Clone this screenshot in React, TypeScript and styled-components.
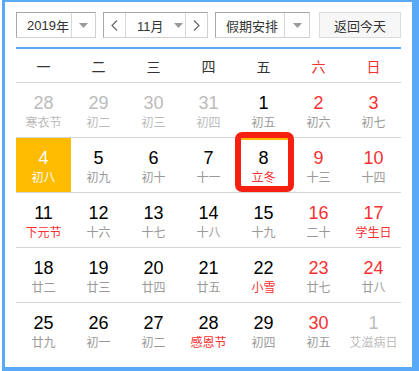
import React from "react";
import styled, { createGlobalStyle } from "styled-components";

const Global = createGlobalStyle`
  html, body { margin: 0; padding: 0; background: #fff; }
  body { font-family: "Liberation Sans", Arial, "Noto Sans CJK SC", sans-serif; }
  * { box-sizing: border-box; }
`;

const BLUE = "#5aa9f6";
const RED = "#f73131";
const ORANGE = "#ffbb00";

const Root = styled.div`
  height: 371px;
  width: 419px;
  padding-left: 2px;
`;

const Frame = styled.div`
  height: 100%;
  background: #fff;
  border-style: solid;
  border-color: ${BLUE};
  border-width: 2px 7px 4px 3px;
  padding: 10px 11px 0 11px;
`;

const Toolbar = styled.div`
  display: flex;
  align-items: stretch;
  height: 26px;
  font-size: 13px;
  color: #333;
  font-family: "Liberation Sans", Arial, "Noto Sans CJK SC", sans-serif;
`;

const Box = styled.div<{ $w: number; $ml?: number }>`
  display: flex;
  align-items: stretch;
  width: ${(p) => p.$w}px;
  margin-left: ${(p) => p.$ml ?? 0}px;
  border: 1px solid #d0d0d0;
  border-left-color: #a8a8a8;
  border-top-color: #a8a8a8;
  background: #fff;
`;

const Label = styled.div<{ $pl?: number }>`
  flex: 1;
  display: flex;
  align-items: center;
  padding-left: ${(p) => p.$pl ?? 10}px;
  white-space: nowrap;
  overflow: hidden;
`;

const CaretCell = styled.div<{ $w: number }>`
  width: ${(p) => p.$w}px;
  flex: none;
  border-left: 1px solid #d8d8d8;
  display: flex;
  align-items: center;
  justify-content: center;
`;

const ArrowBtn = styled.div<{ $side: "l" | "r" }>`
  width: 22px;
  flex: none;
  display: flex;
  align-items: center;
  justify-content: center;
  ${(p) => (p.$side === "l" ? "border-right: 1px solid #d8d8d8;" : "border-left: 1px solid #d8d8d8;")}
`;

const MonthLabel = styled.div`
  flex: 1;
  display: flex;
  align-items: center;
  padding-left: 11px;
  gap: 10px;
`;

const TodayBtn = styled.div`
  width: 82px;
  margin-left: 9px;
  border: 1px solid #dcdcdc;
  background: #f7f7f7;
  display: flex;
  align-items: center;
  justify-content: center;
  font-family: "Noto Sans CJK SC", sans-serif;
  font-size: 13px;
  color: #333;
`;

const BlueRule = styled.div`
  margin-top: 9px;
  height: 2px;
  background: #5aa9f6;
`;

const WeekHead = styled.div`
  display: grid;
  grid-template-columns: repeat(7, 55px);
  height: 34px;
  border-bottom: 1px solid #d6d6d6;
`;

const HeadCell = styled.div<{ $red?: boolean }>`
  display: flex;
  align-items: center;
  justify-content: center;
  font-family: "Noto Sans CJK SC", sans-serif;
  font-size: 14px;
  color: ${(p) => (p.$red ? RED : "#333")};
`;

const WeekRow = styled.div`
  display: grid;
  grid-template-columns: repeat(7, 55px);
  height: 55px;
  border-bottom: 1px solid #d6d6d6;
  &:last-child { border-bottom: none; }
`;

const Cell = styled.div<{ $today?: boolean; $hover?: boolean }>`
  position: relative;
  display: flex;
  flex-direction: column;
  align-items: center;
  padding-top: 9px;
  background: ${(p) => (p.$today ? ORANGE : "transparent")};
  ${(p) => (p.$hover ? `box-shadow: inset 0 2px 0 ${ORANGE};` : "")}
`;

type Tone = "norm" | "red" | "out" | "today";

const Num = styled.div<{ $tone: Tone }>`
  font-family: "Liberation Sans", Arial, sans-serif;
  font-size: 18px;
  line-height: 22px;
  color: ${(p) =>
    p.$tone === "today" ? "#fff" : p.$tone === "red" ? RED : p.$tone === "out" ? "#bbb" : "#000"};
`;

const Lunar = styled.div<{ $tone: "norm" | "fest" | "out" | "today" }>`
  font-family: "Noto Sans CJK SC", sans-serif;
  font-size: 12px;
  line-height: 16px;
  white-space: nowrap;
  color: ${(p) =>
    p.$tone === "today" ? "#fff" : p.$tone === "fest" ? RED : p.$tone === "out" ? "#bbb" : "#999"};
`;

const CjkText = styled.span`
  font-family: "Noto Sans CJK SC", sans-serif;
`;

const Mark = styled.div`
  position: absolute;
  left: -1px;
  top: -6px;
  width: 59px;
  height: 60px;
  border: 6px solid #f5200f;
  border-radius: 7px;
  pointer-events: none;
`;

const Caret = () => (
  <svg width="9" height="5" viewBox="0 0 9 5">
    <path d="M0 0 H9 L4.5 5 Z" fill="#999" />
  </svg>
);

const Chevron = ({ dir }: { dir: "l" | "r" }) => (
  <svg width="7" height="11" viewBox="0 0 7 11">
    <path
      d={dir === "l" ? "M6 0.5 L1 5.5 L6 10.5" : "M1 0.5 L6 5.5 L1 10.5"}
      fill="none"
      stroke="#666"
      strokeWidth="1.2"
    />
  </svg>
);

type Day = { n: number; l: string; out?: boolean; fest?: boolean; today?: boolean; mark?: boolean };

const weeks: Day[][] = [
  [
    { n: 28, l: "寒衣节", out: true },
    { n: 29, l: "初二", out: true },
    { n: 30, l: "初三", out: true },
    { n: 31, l: "初四", out: true },
    { n: 1, l: "初五" },
    { n: 2, l: "初六" },
    { n: 3, l: "初七" },
  ],
  [
    { n: 4, l: "初八", today: true },
    { n: 5, l: "初九" },
    { n: 6, l: "初十" },
    { n: 7, l: "十一" },
    { n: 8, l: "立冬", fest: true, mark: true },
    { n: 9, l: "十三" },
    { n: 10, l: "十四" },
  ],
  [
    { n: 11, l: "下元节", fest: true },
    { n: 12, l: "十六" },
    { n: 13, l: "十七" },
    { n: 14, l: "十八" },
    { n: 15, l: "十九" },
    { n: 16, l: "二十" },
    { n: 17, l: "学生日", fest: true },
  ],
  [
    { n: 18, l: "廿二" },
    { n: 19, l: "廿三" },
    { n: 20, l: "廿四" },
    { n: 21, l: "廿五" },
    { n: 22, l: "小雪", fest: true },
    { n: 23, l: "廿七" },
    { n: 24, l: "廿八" },
  ],
  [
    { n: 25, l: "廿九" },
    { n: 26, l: "初一" },
    { n: 27, l: "初二" },
    { n: 28, l: "感恩节", fest: true },
    { n: 29, l: "初四" },
    { n: 30, l: "初五" },
    { n: 1, l: "艾滋病日", out: true },
  ],
];

const heads = ["一", "二", "三", "四", "五", "六", "日"];

export default function App() {
  return (
    <Root>
      <Global />
      <Frame>
        <Toolbar>
          <Box $w={80}>
            <Label $pl={10}>
              2019<CjkText>年</CjkText>
            </Label>
            <CaretCell $w={24}>
              <Caret />
            </CaretCell>
          </Box>
          <Box $w={105} $ml={7}>
            <ArrowBtn $side="l">
              <Chevron dir="l" />
            </ArrowBtn>
            <MonthLabel>
              <span>
                11<CjkText>月</CjkText>
              </span>
              <Caret />
            </MonthLabel>
            <ArrowBtn $side="r">
              <Chevron dir="r" />
            </ArrowBtn>
          </Box>
          <Box $w={95} $ml={7}>
            <Label $pl={10}>
              <CjkText>假期安排</CjkText>
            </Label>
            <CaretCell $w={25}>
              <Caret />
            </CaretCell>
          </Box>
          <TodayBtn>返回今天</TodayBtn>
        </Toolbar>
        <BlueRule />
        <WeekHead>
          {heads.map((h, i) => (
            <HeadCell key={h} $red={i >= 5}>
              {h}
            </HeadCell>
          ))}
        </WeekHead>
        <div>
          {weeks.map((w, wi) => (
            <WeekRow key={wi}>
              {w.map((d, di) => {
                const numTone: Tone = d.today ? "today" : d.out ? "out" : di >= 5 ? "red" : "norm";
                const lunTone = d.today ? "today" : d.out ? "out" : d.fest ? "fest" : "norm";
                return (
                  <Cell key={di} $today={d.today} $hover={d.mark}>
                    <Num $tone={numTone}>{d.n}</Num>
                    <Lunar $tone={lunTone}>{d.l}</Lunar>
                    {d.mark && <Mark />}
                  </Cell>
                );
              })}
            </WeekRow>
          ))}
        </div>
      </Frame>
    </Root>
  );
}
